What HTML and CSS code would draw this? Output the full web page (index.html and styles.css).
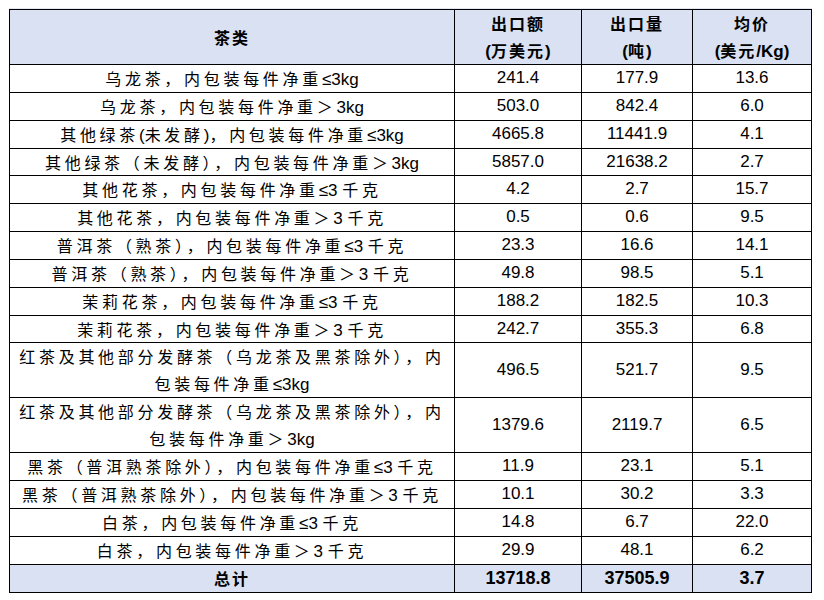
FILE: index.html
```html
<!DOCTYPE html>
<html lang="zh-CN">
<head>
<meta charset="utf-8">
<title>茶类出口</title>
<link rel="stylesheet" href="styles.css">
</head>
<body>
<table class="tea">
  <colgroup>
    <col class="c1"><col class="c2"><col class="c3"><col class="c4">
  </colgroup>
  <thead>
    <tr>
      <th class="name">茶类</th>
      <th class="cjk">出口额<br><span class="n">(</span>万美元<span class="n">)</span></th>
      <th class="cjk">出口量<br><span class="n">(</span>吨<span class="n">)</span></th>
      <th class="cjk">均价<br><span class="n">(</span>美元<span class="n">/Kg)</span></th>
    </tr>
  </thead>
  <tbody>
    <tr><td class="name">乌龙茶，内包装每件净重<span class="n">≤3kg</span></td><td>241.4</td><td>177.9</td><td>13.6</td></tr>
    <tr><td class="name">乌龙茶，内包装每件净重＞<span class="n">3kg</span></td><td>503.0</td><td>842.4</td><td>6.0</td></tr>
    <tr><td class="name">其他绿茶<span class="n">(</span>未发酵<span class="n">)</span>，内包装每件净重<span class="n">≤3kg</span></td><td>4665.8</td><td>11441.9</td><td>4.1</td></tr>
    <tr><td class="name">其他绿茶（未发酵），内包装每件净重＞<span class="n">3kg</span></td><td>5857.0</td><td>21638.2</td><td>2.7</td></tr>
    <tr><td class="name">其他花茶，内包装每件净重<span class="n">≤3 </span>千克</td><td>4.2</td><td>2.7</td><td>15.7</td></tr>
    <tr><td class="name">其他花茶，内包装每件净重＞<span class="n">3 </span>千克</td><td>0.5</td><td>0.6</td><td>9.5</td></tr>
    <tr><td class="name">普洱茶（熟茶），内包装每件净重<span class="n">≤3 </span>千克</td><td>23.3</td><td>16.6</td><td>14.1</td></tr>
    <tr><td class="name">普洱茶（熟茶），内包装每件净重＞<span class="n">3 </span>千克</td><td>49.8</td><td>98.5</td><td>5.1</td></tr>
    <tr><td class="name">茉莉花茶，内包装每件净重<span class="n">≤3 </span>千克</td><td>188.2</td><td>182.5</td><td>10.3</td></tr>
    <tr><td class="name">茉莉花茶，内包装每件净重＞<span class="n">3 </span>千克</td><td>242.7</td><td>355.3</td><td>6.8</td></tr>
    <tr><td class="name two">红茶及其他部分发酵茶（乌龙茶及黑茶除外），内<br>包装每件净重<span class="n">≤3kg</span></td><td>496.5</td><td>521.7</td><td>9.5</td></tr>
    <tr><td class="name two">红茶及其他部分发酵茶（乌龙茶及黑茶除外），内<br>包装每件净重＞<span class="n">3kg</span></td><td>1379.6</td><td>2119.7</td><td>6.5</td></tr>
    <tr><td class="name">黑茶（普洱熟茶除外），内包装每件净重<span class="n">≤3 </span>千克</td><td>11.9</td><td>23.1</td><td>5.1</td></tr>
    <tr><td class="name">黑茶（普洱熟茶除外），内包装每件净重＞<span class="n">3 </span>千克</td><td>10.1</td><td>30.2</td><td>3.3</td></tr>
    <tr><td class="name">白茶，内包装每件净重<span class="n">≤3 </span>千克</td><td>14.8</td><td>6.7</td><td>22.0</td></tr>
    <tr><td class="name">白茶，内包装每件净重＞<span class="n">3 </span>千克</td><td>29.9</td><td>48.1</td><td>6.2</td></tr>
  </tbody>
  <tfoot>
    <tr><th class="name">总计</th><th class="num">13718.8</th><th class="num">37505.9</th><th class="num">3.7</th></tr>
  </tfoot>
</table>
</body>
</html>
```

FILE: styles.css
```css
html, body {
  margin: 0;
  padding: 0;
  background: #ffffff;
}

body {
  padding: 9px 0 0 9px;
  font-family: "Liberation Sans", "Noto Sans CJK SC", sans-serif;
  color: #000000;
}

.tea {
  border-collapse: collapse;
  table-layout: fixed;
  width: 802px;
  box-shadow: 0 -1px 0 #e2e7f1;
}

.c1 { width: 445px; }
.c2 { width: 127px; }
.c3 { width: 111px; }
.c4 { width: 119px; }

.tea th,
.tea td {
  border: 1px solid #000000;
  padding: 0;
  text-align: center;
  vertical-align: middle;
  line-height: 26.85px;
  font-size: 17px;
  font-weight: normal;
}

.tea .name,
.tea .cjk {
  font-family: "Noto Sans CJK SC", sans-serif;
}

.tea td.name {
  font-size: 16px;
  letter-spacing: 3.7px;
}

.tea td.two {
  line-height: 27px;
}

.tea thead th {
  line-height: 27px;
}

.tea thead th,
.tea tfoot th {
  background: #d9e1f2;
  font-weight: bold;
  font-size: 16px;
  letter-spacing: 2px;
}

.tea tfoot th {
  line-height: 27.3px;
}

.tea tfoot th.num {
  font-size: 18px;
  letter-spacing: 0;
}

.n {
  font-family: "Liberation Sans", sans-serif;
  font-size: 17px;
  line-height: 1;
  letter-spacing: 0;
}
```
